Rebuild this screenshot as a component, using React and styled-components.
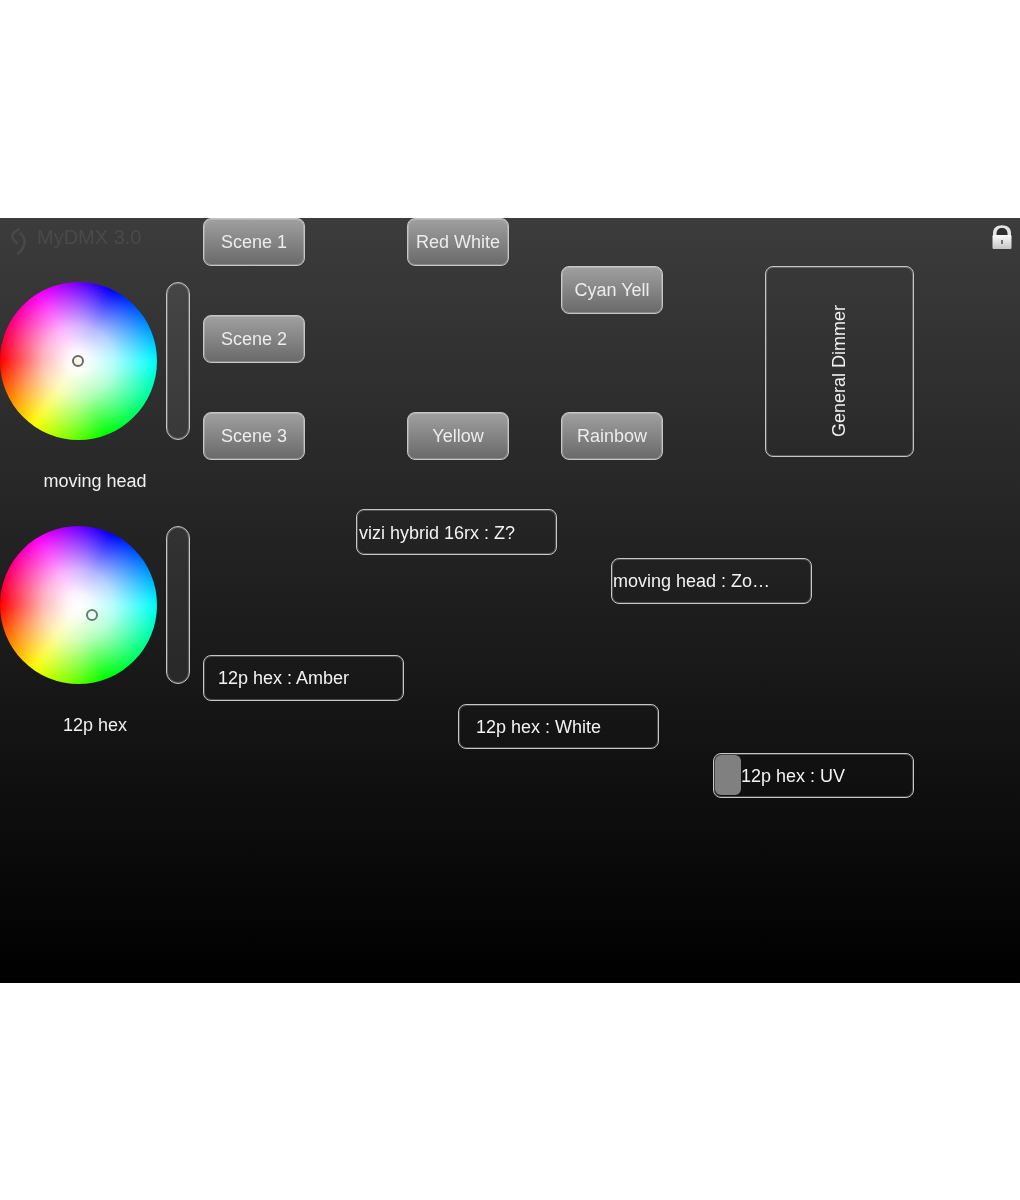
import React from "react";
import styled, { createGlobalStyle, css } from "styled-components";

const GlobalStyle = createGlobalStyle`
    html, body {
        margin: 0;
        padding: 0;
        background: #fff;
    }
    body {
        font-family: "Liberation Sans", Arial, sans-serif;
    }
`;

const softOutline = css`
    border: 1px solid #c6c6c6;
    box-shadow: inset 0 0 0 1px rgba(255, 255, 255, 0.22);
`;

const Page = styled.div`
    width: 1020px;
    height: 1200px;
    padding-top: 218px;
    box-sizing: border-box;
`;

const Screen = styled.div`
    width: 1020px;
    height: 765px;
    overflow: hidden;
    background: linear-gradient(180deg, #3c3c3c 0%, #000 100%);
`;

const SnapGrid = styled.div`
    display: grid;
    grid-template-columns: 50px repeat(9, 51px) 52px 50px 51px 51px 52px repeat(5, 51px);
    grid-auto-rows: 48.62px;
    align-items: start;
    justify-items: start;
    margin-top: -0.2px;
    filter: blur(0.6px);
`;

const Cell = styled.div`
    grid-column: ${(p) => p.$col} / span ${(p) => p.$cols || 1};
    grid-row: ${(p) => p.$row} / span ${(p) => p.$rows || 1};
`;

const Brand = styled(Cell)`
    display: flex;
    align-items: flex-start;
    gap: 11px;
    padding: 8px 0 0 10px;
    color: #4a4a4a;
    font-size: 20px;
    line-height: 23px;
    white-space: nowrap;
    svg {
        margin-top: 2px;
    }
`;

const ColorControl = styled(Cell)`
    width: 190px;
    padding-top: ${(p) => p.$top}px;
`;

const WheelRow = styled.div`
    display: flex;
    gap: 9px;
`;

const Wheel = styled.div`
    position: relative;
    width: 157px;
    height: 158px;
    border-radius: 50%;
    overflow: hidden;
    &::before {
        content: "";
        position: absolute;
        inset: -8px;
        background: conic-gradient(from 25deg, #00f, #0ff 65deg, #0f0 135deg, #ff0 190deg, #f00 245deg, #f0f 305deg, #00f);
        filter: blur(4px);
    }
    &::after {
        content: "";
        position: absolute;
        inset: 0;
        background: radial-gradient(closest-side, #fff 0%, rgba(255, 255, 255, 0.95) 15%, rgba(255, 255, 255, 0.7) 45%, rgba(255, 255, 255, 0.3) 75%, rgba(255, 255, 255, 0) 98%);
    }
`;

const Handle = styled.div`
    position: absolute;
    z-index: 1;
    left: ${(p) => p.$x - 6}px;
    top: ${(p) => p.$y - 6}px;
    width: 12px;
    height: 12px;
    box-sizing: border-box;
    border-radius: 50%;
    border: 2px solid ${(p) => p.$ring};
    background: ${(p) => p.$fill};
`;

const VerticalSlider = styled.div`
    ${softOutline}
    width: 24px;
    height: 158px;
    box-sizing: border-box;
    border-radius: 12px;
    background-color: rgba(255, 255, 255, 0.07);
`;

const WheelLabel = styled.div`
    margin-top: 30px;
    text-align: center;
    color: #f0f0f0;
    font-size: 18px;
    line-height: 22px;
    white-space: nowrap;
`;

const SceneButton = styled(Cell)`
    ${softOutline}
    width: 102px;
    height: 48px;
    box-sizing: border-box;
    display: flex;
    align-items: center;
    justify-content: center;
    padding-top: ${(p) => (p.$row === 1 ? 1 : 0)}px;
    border-radius: 8px;
    background: linear-gradient(180deg, #a0a0a0 0%, #696969 100%);
    color: #ececec;
    font-size: 18px;
    white-space: nowrap;
`;

const Dimmer = styled(Cell)`
    ${softOutline}
    width: 149px;
    height: 191px;
    box-sizing: border-box;
    display: flex;
    align-items: center;
    justify-content: center;
    padding-top: 18px;
    border-radius: 8px;
    color: #f0f0f0;
    font-size: 18px;
`;

const DimmerText = styled.span`
    writing-mode: vertical-rl;
    transform: rotate(180deg);
    white-space: nowrap;
`;

const Fader = styled(Cell)`
    ${softOutline}
    position: relative;
    width: 201px;
    height: 45.5px;
    box-sizing: border-box;
    display: flex;
    align-items: center;
    padding-left: ${(p) => p.$inset}px;
    border-radius: 8px;
    color: #f2f2f2;
    font-size: 18px;
    white-space: nowrap;
`;

const FaderThumb = styled.div`
    position: absolute;
    left: 1px;
    top: 1px;
    bottom: 2px;
    width: 26px;
    border-radius: 6px;
    background: #808080;
`;

const FaderLabel = styled.span`
    position: relative;
    top: ${(p) => p.$drop}px;
`;

const LockCell = styled(Cell)`
    justify-self: end;
    margin: 7px 8px 0 0;
    line-height: 0;
`;

const scenes = [
    { label: "Scene 1", col: 5, row: 1 },
    { label: "Scene 2", col: 5, row: 3 },
    { label: "Scene 3", col: 5, row: 5 },
    { label: "Red White", col: 9, row: 1 },
    { label: "Yellow", col: 9, row: 5 },
    { label: "Cyan Yell", col: 12, row: 2 },
    { label: "Rainbow", col: 12, row: 5 },
];

const faders = [
    { label: "vizi hybrid 16rx : Z?", col: 8, row: 7, inset: 2, drop: 1 },
    { label: "moving head : Zo…", col: 13, row: 8, inset: 1, drop: 1 },
    { label: "12p hex : Amber", col: 5, row: 10, inset: 14, drop: 0 },
    { label: "12p hex : White", col: 10, row: 11, inset: 17, drop: 1 },
    { label: "12p hex : UV", col: 15, row: 12, inset: 27, drop: 1, thumb: true },
];

const LogoMark = () => (
    <svg width="16" height="27" viewBox="0 0 16 27" fill="none" stroke="#484848" strokeWidth="2.6" strokeLinecap="round">
        <path d="M8.5 1.5 C4 3.5 1.5 6.5 2.5 10 C3.2 12 5 13 7 15" />
        <path d="M10.5 5.5 C15 9.5 15.5 14 13.5 18.5 C12.3 21.5 10.5 24 8 25.5" />
    </svg>
);

const LockIcon = () => (
    <svg width="20" height="24" viewBox="0 0 20 24">
        <defs>
            <linearGradient id="lockBody" x1="0" y1="0" x2="0" y2="1">
                <stop offset="0" stopColor="#fbfbfb" />
                <stop offset="1" stopColor="#c4c4c4" />
            </linearGradient>
        </defs>
        <path d="M1 11 V8 C1 3 5 0.3 10 0.3 C15 0.3 19 3 19 8 V11 Z" fill="#e4e4e4" />
        <path d="M4.5 10 V8.5 C4.5 5 6.8 3 10 3 C13.2 3 15.5 5 15.5 8.5 V10 Z" fill="#2e2e2e" />
        <rect x="0.5" y="10" width="19" height="14" rx="1.2" fill="url(#lockBody)" />
        <rect x="9.2" y="15" width="1.6" height="4" fill="#555" />
    </svg>
);

const App = () => {
    return (
        <Page>
            <GlobalStyle />
            <Screen>
                <SnapGrid>
                    <Brand $col={1} $cols={4} $row={1}>
                        <LogoMark />
                        <span>MyDMX 3.0</span>
                    </Brand>

                    <ColorControl $col={1} $cols={4} $row={2} $rows={5} $top={15.5}>
                        <WheelRow>
                            <Wheel>
                                <Handle $x={78} $y={79} $ring="#6a6a6a" $fill="#f6f6ea" />
                            </Wheel>
                            <VerticalSlider />
                        </WheelRow>
                        <WheelLabel>moving head</WheelLabel>
                    </ColorControl>

                    <ColorControl $col={1} $cols={4} $row={7} $rows={5} $top={16.9}>
                        <WheelRow>
                            <Wheel>
                                <Handle $x={92} $y={89} $ring="#64806f" $fill="#e9fff7" />
                            </Wheel>
                            <VerticalSlider />
                        </WheelRow>
                        <WheelLabel>12p hex</WheelLabel>
                    </ColorControl>

                    {scenes.map((s) => (
                        <SceneButton key={s.label} $col={s.col} $cols={2} $row={s.row}>
                            {s.label}
                        </SceneButton>
                    ))}

                    <Dimmer $col={16} $cols={3} $row={2} $rows={4}>
                        <DimmerText>General Dimmer</DimmerText>
                    </Dimmer>

                    {faders.map((f) => (
                        <Fader key={f.label} $col={f.col} $cols={4} $row={f.row} $inset={f.inset}>
                            {f.thumb && <FaderThumb />}
                            <FaderLabel $drop={f.drop}>{f.label}</FaderLabel>
                        </Fader>
                    ))}

                    <LockCell $col={20} $row={1}>
                        <LockIcon />
                    </LockCell>
                </SnapGrid>
            </Screen>
        </Page>
    );
};

export default App;
